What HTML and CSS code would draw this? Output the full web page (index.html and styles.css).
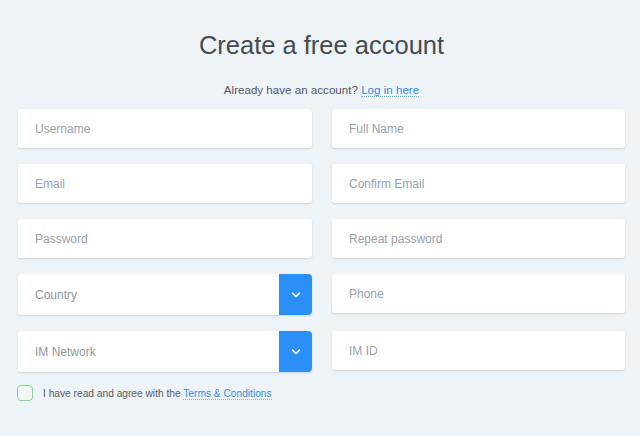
FILE: index.html
```html
<!DOCTYPE html>
<html>
<head>
<meta charset="utf-8">
<link rel="stylesheet" href="styles.css">
</head>
<body>
<div class="page">
  <h1 class="title">Create a free account</h1>
  <p class="subtitle">Already have an account? <a class="link" href="#">Log in here</a></p>
  <div class="grid">
    <div class="field"><input class="input" placeholder="Username"></div>
    <div class="field"><input class="input" placeholder="Full Name"></div>
    <div class="field"><input class="input" placeholder="Email"></div>
    <div class="field"><input class="input" placeholder="Confirm Email"></div>
    <div class="field"><input class="input" placeholder="Password"></div>
    <div class="field"><input class="input" placeholder="Repeat password"></div>
    <div class="select">
      <span class="select-label">Country</span>
      <span class="select-btn"><svg width="10" height="6" viewBox="0 0 10 6"><path d="M1.5 1.2 L5 4.5 L8.5 1.2" fill="none" stroke="#fff" stroke-width="1.6" stroke-linecap="round" stroke-linejoin="round"/></svg></span>
    </div>
    <div class="field"><input class="input" placeholder="Phone"></div>
    <div class="select">
      <span class="select-label">IM Network</span>
      <span class="select-btn"><svg width="10" height="6" viewBox="0 0 10 6"><path d="M1.5 1.2 L5 4.5 L8.5 1.2" fill="none" stroke="#fff" stroke-width="1.6" stroke-linecap="round" stroke-linejoin="round"/></svg></span>
    </div>
    <div class="field"><input class="input" placeholder="IM ID"></div>
  </div>
  <label class="agree">
    <span class="checkbox"></span>
    <span class="agree-text">I have read and agree with the <a class="link" href="#">Terms &amp; Conditions</a></span>
  </label>
</div>
</body>
</html>
```

FILE: styles.css
```css
html, body {
  margin: 0;
  padding: 0;
  background: #edf3f7;
  font-family: "Liberation Sans", Arial, sans-serif;
}
.page {
  padding: 30px 15px 0 18px;
}
.title {
  margin: 0;
  font-size: 25.5px;
  line-height: 30px;
  font-weight: normal;
  color: #474b50;
  text-align: center;
}
.subtitle {
  margin: 22px 0 0;
  font-size: 11.6px;
  line-height: 16px;
  color: #555a5f;
  text-align: center;
}
.link {
  color: #3a8cd8;
  text-decoration: none;
  border-bottom: 1px dotted #7fb5e6;
}
.grid {
  margin-top: 11px;
  display: grid;
  grid-template-columns: 294px 293px;
  column-gap: 20px;
  row-gap: 16px;
  align-items: start;
}
.field {
  height: 39px;
}
.input {
  box-sizing: border-box;
  width: 100%;
  height: 39px;
  border: none;
  border-radius: 3px;
  background: #fff;
  box-shadow: 0 1px 2px rgba(120, 140, 160, 0.28);
  padding: 0 17px;
  font-family: "Liberation Sans", Arial, sans-serif;
  font-size: 12px;
  color: #555;
  outline: none;
}
.input::placeholder {
  color: #96a0aa;
}
.select {
  display: flex;
  height: 41px;
  background: #fff;
  border-radius: 3px;
  box-shadow: 0 1px 2px rgba(120, 140, 160, 0.28);
}
.select-label {
  flex: 1;
  display: flex;
  align-items: center;
  padding-left: 17px;
  font-size: 12px;
  color: #8e98a2;
}
.select-btn {
  width: 33px;
  display: flex;
  align-items: center;
  justify-content: center;
  background: #2b8ff8;
  border-radius: 0 4px 4px 0;
}
.agree {
  display: flex;
  align-items: center;
  margin-top: 13px;
  margin-left: -1px;
}
.checkbox {
  box-sizing: border-box;
  width: 16px;
  height: 16px;
  border: 1px solid #8fcf9a;
  border-radius: 4px;
  background: #f3f8f4;
}
.agree-text {
  margin-left: 10px;
  font-size: 10.2px;
  color: #585c60;
}
```
